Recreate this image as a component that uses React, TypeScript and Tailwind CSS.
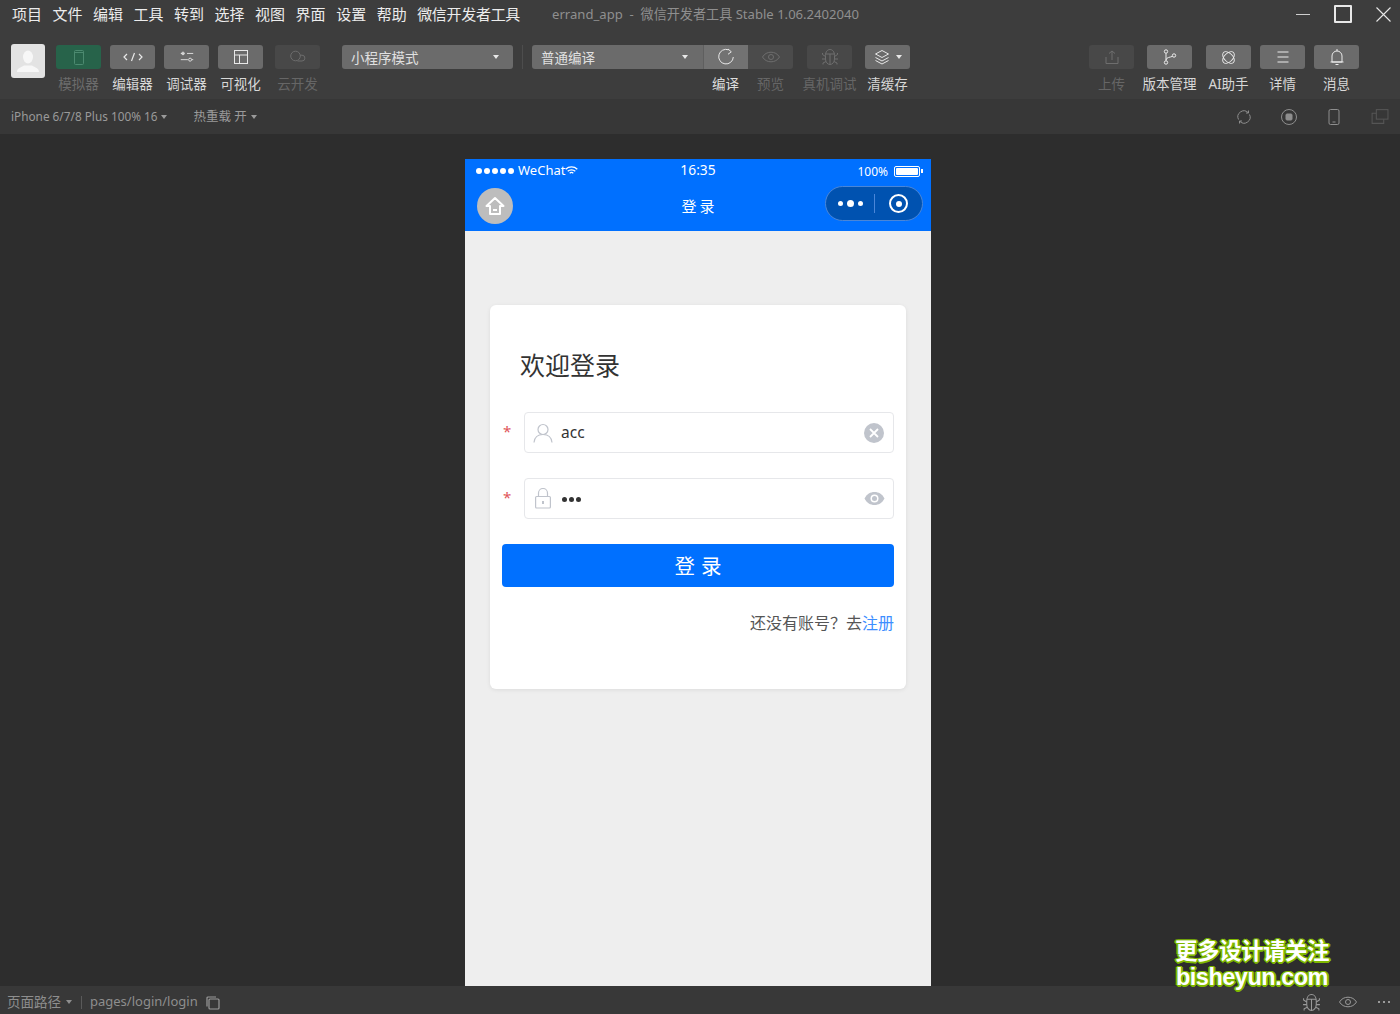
const font = "font-['Noto_Sans','Noto_Sans_CJK_SC',sans-serif]";
const menus = ["项目", "文件", "编辑", "工具", "转到", "选择", "视图", "界面", "设置", "帮助"];

function Caret({ className = "" }: { className?: string }) {
  return <span className={"inline-block w-0 h-0 border-x-[3px] border-x-transparent border-t-[4px] " + className} />;
}

function Tool({
  label,
  bg = "bg-[#6b6b6b]",
  text = "text-[#d8d8d8]",
  children,
}: {
  label?: string;
  bg?: string;
  text?: string;
  children?: React.ReactNode;
}) {
  return (
    <div className="flex flex-col items-center w-[45px]">
      <div className={"w-full h-6 rounded-[3px] flex items-center justify-center " + bg}>{children}</div>
      <div className={"h-[20px] mt-[5px] text-[13.5px] leading-[20px] whitespace-nowrap " + text}>{label}</div>
    </div>
  );
}

const Ico = ({ c, children, w = 18 }: { c: string; children: React.ReactNode; w?: number }) => (
  <svg width={w} height={w} viewBox="0 0 18 18" fill="none" stroke={c} strokeWidth="1">
    {children}
  </svg>
);

function Bug({ c, size = 18 }: { c: string; size?: number }) {
  return (
    <Ico c={c} w={size}>
      <path d="M4.500 7.500C4.500 3.800 6.500 1.500 9 1.500s4.500 2.300 4.500 6v3.500c0 3-2 5.500-4.500 5.500s-4.500-2.500-4.500-5.500z" />
      <path d="M4.500 6h9M9 6v10.500M4.500 8.500L1.500 6.500V5M13.500 8.500l3-2V5M4.500 11H1M13.500 11H17M5 13.500l-3 1.500v1.500M13 13.500l3 1.500v1.500" />
    </Ico>
  );
}

function Eye({ c }: { c: string }) {
  return (
    <Ico c={c}>
      <path d="M.500 9c2-3.200 4.900-4.800 8.500-4.800s6.500 1.600 8.500 4.800c-2 3.200-4.900 4.800-8.500 4.800S2.500 12.200.500 9z" />
      <circle cx="9" cy="9" r="2.500" />
    </Ico>
  );
}

function Field({ icon, right, children }: { icon: React.ReactNode; right: React.ReactNode; children: React.ReactNode }) {
  return (
    <div className="flex items-center">
      <div className="w-[22px] pl-px text-[#e0555a] text-[15px] leading-none pb-[3px]">*</div>
      <div className="flex-1 h-[41px] rounded-[4px] border border-[#e6e7ea] flex items-center pl-[8px] pr-[8px] text-[#333]">
        <div className="w-[20px] flex justify-center">{icon}</div>
        <div className="flex-1 ml-[8px] pt-px text-[15.500px]">{children}</div>
        {right}
      </div>
    </div>
  );
}

export default function App() {
  return (
    <div className={"relative w-[1400px] h-[1014px] overflow-hidden flex flex-col bg-[#2d2d2d] " + font}>
      {/* titlebar + toolbar */}
      <div className="h-[99px] bg-[#3d3d3d] shrink-0">
        <div className="h-[28px] flex items-center pl-3 text-[15px] text-[#ececec]">
          <div className="flex gap-[10.500px]">
            {menus.map((m) => (
              <span key={m}>{m}</span>
            ))}
            <span className="tracking-[-0.3px]">微信开发者工具</span>
          </div>
          <span className="ml-[32px] pt-px text-[13.100px] text-[#8f8f8f]">errand_app&nbsp; -&nbsp; 微信开发者工具 Stable 1.06.2402040</span>
          <div className="ml-auto flex items-center">
            <div className="w-[14px] h-px bg-[#cfcfcf] mr-[24px]" />
            <div className="w-[18px] h-[18px] border-2 border-[#e8e8e8] rounded-[1px] mr-[24px]" />
            <svg className="mr-[9px]" width="15" height="15" viewBox="0 0 15 15" fill="none" stroke="#e8e8e8" strokeWidth="1.100">
              <path d="M.500.500l14 14M14.500.500l-14 14" />
            </svg>
          </div>
        </div>
        <div className="mt-[17px] flex pl-[11px]">
          <div className="w-[34px] h-[34px] -mt-[1px] rounded-[3px] bg-[#e3e3e3] flex items-center justify-center mr-[11px]">
            <svg width="26" height="26" viewBox="0 0 26 26" fill="#f7f7f7">
              <ellipse cx="13" cy="9" rx="5" ry="6.500" />
              <path d="M2 24c0-4 4-4.500 7-6.500h8c3 2 7 2.500 7 6.500z" />
            </svg>
          </div>
          <div className="flex gap-[9px]">
            <Tool label="模拟器" bg="bg-[#27634a]" text="text-[#6c6c6c]">
              <svg width="10" height="15" viewBox="0 0 10 15" fill="none" stroke="#4c8a70"><rect x="0.500" y="0.500" width="9" height="14" rx="1" /><path d="M.500 2.500h9" /></svg>
            </Tool>
            <Tool label="编辑器">
              <svg width="20" height="10" viewBox="0 0 20 10" fill="none" stroke="#e8e8e8" strokeWidth="1.200">
                <path d="M4 2L1 5l3 3M16 2l3 3-3 3M11.500 1L8.500 9" />
              </svg>
            </Tool>
            <Tool label="调试器">
              <Ico c="#e4e4e4" w={16}>
                <path d="M2 5h4M9 5h7M2 12h8M14.500 12H16" />
                <circle cx="7.500" cy="5" r="1.500" transform="translate(-3 0)" />
                <circle cx="12.500" cy="12" r="1.700" />
              </Ico>
            </Tool>
            <Tool label="可视化">
              <Ico c="#e8e8e8">
                <rect x="2.500" y="2.500" width="13" height="13" />
                <path d="M2.500 7h13M7.500 7v8.500" />
              </Ico>
            </Tool>
          </div>
          <div className="ml-3">
            <Tool label="云开发" bg="bg-[#484848]" text="text-[#666]">
              <Ico c="#6c6c6c">
                <circle cx="6.500" cy="8" r="4.800" />
                <path d="M8.500 13h4.500a2.900 2.900 0 0 0 0-5.800h-2" />
              </Ico>
            </Tool>
          </div>
          <div className="ml-[22px] w-[171px] h-6 rounded-[3px] bg-[#6b6b6b] flex items-center pl-[9px] pr-[14px] text-[13.500px] text-[#e0e0e0]">
            <span className="pt-[2px]">小程序模式</span>
            <Caret className="ml-auto border-t-[#e8e8e8]" />
          </div>
          <div className="ml-[9px] w-px h-6 bg-[#4d4d4d]" />
          <div className="ml-[9px] flex">
            <div className="w-[171px] h-6 rounded-l-[3px] bg-[#6b6b6b] flex items-center pl-[9px] pr-[15px] text-[13.500px] text-[#e0e0e0]">
              <span className="pt-[2px]">普通编译</span>
              <Caret className="ml-auto border-t-[#e8e8e8]" />
            </div>
            <Tool label="编译" text="text-[#dcdcdc]" bg="bg-[#727272] border-l border-[#5f5f5f] rounded-none">
              <Ico c="#e8e8e8">
                <path d="M11.500 1.800A7.300 7.300 0 1 0 16.300 9" />
                <path d="M11 1l3.300 2.800L11 6.300" />
              </Ico>
            </Tool>
            <Tool label="预览" bg="bg-[#4b4b4b] rounded-l-none" text="text-[#666]">
              <Eye c="#6e6e6e" />
            </Tool>
          </div>
          <div className="ml-[14px]">
            <Tool label="真机调试" bg="bg-[#484848]" text="text-[#666]">
              <Bug c="#6e6e6e" />
            </Tool>
          </div>
          <div className="ml-[13px]">
            <Tool label="清缓存">
              <Ico c="#e8e8e8">
                <path d="M9 2.500L2.500 6 9 9.500 15.500 6zM2.500 9.500L9 13l6.500-3.500M2.500 12.500L9 16l6.500-3.500" />
              </Ico>
              <Caret className="ml-[5px] border-t-[#e8e8e8]" />
            </Tool>
          </div>
          <div className="ml-auto mr-[41px] flex">
            <div className="mr-[13px]">
              <Tool label="上传" bg="bg-[#484848]" text="text-[#666]">
                <Ico c="#6e6e6e">
                  <path d="M9 12V3M6 5.500L9 3l3 2.500M3 9v6.500h12V9" />
                </Ico>
              </Tool>
            </div>
            <div className="mr-[14px]">
              <Tool label="版本管理">
                <Ico c="#ececec">
                  <circle cx="5" cy="3.500" r="1.700" />
                  <circle cx="5" cy="14.500" r="1.700" />
                  <circle cx="13" cy="7.500" r="1.700" />
                  <path d="M5 5.200v7.600M11.500 8.300C9 9.500 5.500 9 5 12" />
                </Ico>
              </Tool>
            </div>
            <div className="flex gap-[9px]">
              <Tool label="AI助手">
                <Ico c="#ececec" w={17}>
                  <ellipse cx="9" cy="9" rx="7.500" ry="4.500" transform="rotate(45 9 9)" />
                  <ellipse cx="9" cy="9" rx="7.500" ry="4.500" transform="rotate(-45 9 9)" />
                </Ico>
              </Tool>
              <Tool label="详情">
                <Ico c="#ececec">
                  <path d="M3.500 4h11M3.500 9h11M3.500 14h11" />
                </Ico>
              </Tool>
              <Tool label="消息">
                <Ico c="#ececec">
                  <path d="M4 14V8a5 5 0 0 1 10 0v6zM2.500 14h13M9 1v2M7.500 16.500h3" />
                </Ico>
              </Tool>
            </div>
          </div>
        </div>
      </div>

      {/* device bar */}
      <div className="h-[35px] bg-[#373737] shrink-0 flex items-center pl-[11px] pr-[11px] text-[11.800px] text-[#9a9a9a]">
        <span className="pt-px">iPhone 6/7/8 Plus 100% 16</span>
        <Caret className="ml-[3px] border-t-[#9a9a9a]" />
        <span className="ml-[27px] pt-px text-[12.500px]">热重载 开</span>
        <Caret className="ml-[4px] border-t-[#9a9a9a]" />
        <div className="ml-auto flex items-center gap-[27px]">
          <Ico c="#8e8e8e">
            <path d="M3.500 11.500A6 6 0 0 1 13 4.500M14.500 6.500A6 6 0 0 1 5 13.500" />
            <path d="M13.500 2.500v2.500H11M4.500 15.500V13H7" />
          </Ico>
          <svg width="18" height="18" viewBox="0 0 18 18" fill="none" stroke="#8e8e8e">
            <circle cx="9" cy="9" r="7.500" />
            <rect x="6" y="6" width="6" height="6" rx="1" fill="#8e8e8e" />
          </svg>
          <Ico c="#8e8e8e">
            <rect x="4" y="1.500" width="10" height="15" rx="1.500" />
            <path d="M7.500 14h3" />
          </Ico>
          <Ico c="#555" w={19}>
            <rect x="6" y="2.500" width="11" height="9" />
            <path d="M6 6H2v9.500h11v-4" />
          </Ico>
        </div>
      </div>

      {/* simulator */}
      <div className="flex-1 min-h-0 flex justify-center pt-[25px] pr-[4px]">
        <div className="w-[466px] bg-[#eeeeee] flex flex-col">
          <div className="h-[72px] bg-[#0070ff] shrink-0 text-white flex flex-col">
            <div className="h-[24px] flex items-center pl-[11px] pr-[8px] relative">
              <div className="flex gap-[2px]">
                {[0, 1, 2, 3, 4].map((i) => (
                  <span key={i} className="w-[6px] h-[6px] rounded-full bg-white" />
                ))}
              </div>
              <span className="ml-[4px] text-[13px]">WeChat</span>
              <svg width="13" height="10" viewBox="0 0 13 10" fill="none" stroke="white" strokeWidth="1.300">
                <path d="M.700 3.200a8.500 8.500 0 0 1 11.600 0M2.700 5.300a5.500 5.500 0 0 1 7.600 0M4.700 7.300a2.600 2.600 0 0 1 3.600 0" />
              </svg>
              <span className="absolute left-0 right-0 text-center text-[13.800px] -mt-[1px]">16:35</span>
              <span className="ml-auto pt-px text-[12px]">100%</span>
              <div className="ml-[6px] w-[26px] h-[11px] border border-white rounded-[2px] p-px">
                <div className="w-full h-full bg-white rounded-[1px]" />
              </div>
              <div className="w-[2px] h-[4px] bg-white ml-px" />
            </div>
            <div className="flex-1 relative flex items-center justify-center pb-[1px]">
              <span className="text-[15px] tracking-[3px] pl-[3px]">登录</span>
              <div className="absolute left-[12px] top-[5px] w-9 h-9 rounded-full bg-[#bdbdbd] flex items-center justify-center">
                <svg width="22" height="22" viewBox="0 0 22 22" fill="none" stroke="white" strokeWidth="2" strokeLinejoin="round">
                  <path d="M11 3L2.500 11H6v8h10v-8h3.500z" />
                  <path d="M9 15h4" />
                </svg>
              </div>
              <div className="absolute right-[8px] top-[3px] w-[98px] h-[35px] rounded-full bg-[#0052b0] border border-[#4a86d8] flex items-center">
                <div className="w-[48px] flex items-center justify-center gap-[4px]">
                  <span className="w-[5px] h-[5px] rounded-full bg-white" />
                  <span className="w-[7px] h-[7px] rounded-full bg-white" />
                  <span className="w-[5px] h-[5px] rounded-full bg-white" />
                </div>
                <div className="w-px h-[19px] bg-[#4a86d8]" />
                <div className="flex-1 flex justify-center">
                  <div className="w-[19px] h-[19px] rounded-full border-[2.500px] border-white flex items-center justify-center">
                    <div className="w-[6px] h-[6px] rounded-full bg-white" />
                  </div>
                </div>
              </div>
            </div>
          </div>

          <div className="px-[25px] pt-[74px]">
            <div className="h-[384px] bg-white rounded-[6px] shadow-[0_1px_4px_rgba(0,0,0,0.08)] px-[12px] pt-[43px]">
              <div className="pl-[18px] text-[25px] leading-[34px] text-[#333]">欢迎登录</div>
              <div className="mt-[30px] flex flex-col gap-[25px]">
                <Field
                  icon={
                    <svg width="20" height="20" viewBox="0 0 20 20" fill="none" stroke="#c0c4cc" strokeWidth="1.200">
                      <circle cx="10" cy="6.500" r="5" />
                      <path d="M1 19.500c.5-5 4-8 9-8s8.500 3 9 8" />
                    </svg>
                  }
                  right={
                    <div className="w-5 h-5 mr-px rounded-full bg-[#c0c4cc] flex items-center justify-center">
                      <svg width="10" height="10" viewBox="0 0 10 10" stroke="white" strokeWidth="1.800">
                        <path d="M1 1l8 8M9 1L1 9" />
                      </svg>
                    </div>
                  }
                >
                  acc
                </Field>
                <Field
                  icon={
                    <svg width="16" height="21" viewBox="0 0 16 21" fill="none" stroke="#c0c4cc" strokeWidth="1.200">
                      <rect x="0.600" y="8.500" width="14.800" height="11.500" rx="1" />
                      <path d="M3.500 8.500V5a4.500 4.500 0 0 1 9 0v3.500" />
                      <path d="M8 13v3" strokeWidth="2" />
                    </svg>
                  }
                  right={
                    <svg width="21" height="15" viewBox="0 0 21 15">
                      <path fill="#c0c4cc" d="M.500 7.500C2.800 3 6.300 1 10.500 1s7.700 2 10 6.500c-2.300 4.500-5.800 6.500-10 6.500S2.800 12 .500 7.500z" />
                      <circle cx="10.500" cy="7.500" r="4" fill="#fff" />
                      <circle cx="10.500" cy="7.500" r="2.500" fill="#c0c4cc" />
                    </svg>
                  }
                >
                  <span className="flex gap-[2px] ml-[1px]">
                    <span className="w-[5px] h-[5px] rounded-full bg-[#333]" />
                    <span className="w-[5px] h-[5px] rounded-full bg-[#333]" />
                    <span className="w-[5px] h-[5px] rounded-full bg-[#333]" />
                  </span>
                </Field>
              </div>
              <div className="mt-[25px] h-[43px] rounded-[4px] bg-[#0070ff] text-white text-[20.500px] tracking-[6px] flex items-center justify-center pl-[6px] pt-px">
                登录
              </div>
              <div className="mt-[25px] text-right text-[16px] leading-[22px] text-[#555]">
                还没有账号？去<span className="text-[#3d8eff]">注册</span>
              </div>
            </div>
          </div>
        </div>
      </div>

      {/* bottom bar */}
      <div className="h-[28px] bg-[#383838] shrink-0 flex items-center pl-[7px] pr-[9px] pt-[4px] text-[13.500px] text-[#8e8e8e]">
        <span>页面路径</span>
        <Caret className="ml-[5px] border-x-[3.500px] border-t-[#8e8e8e]" />
        <div className="ml-[9px] w-px h-[13px] bg-[#5a5a5a]" />
        <span className="ml-[8px] text-[13px]">pages/login/login</span>
        <svg className="ml-[8px] mt-[2px]" width="14" height="14" viewBox="0 0 14 14" fill="none" stroke="#9a9a9a" strokeWidth="1.200">
          <rect x="3" y="3" width="10" height="10" rx="1" />
          <path d="M1 10.500V2a1 1 0 0 1 1-1h8" />
        </svg>
        <div className="ml-auto flex items-center gap-[18px]">
          <Bug c="#9a9a9a" size={19} />
          <Eye c="#9a9a9a" />
          <div className="flex gap-[3px] ml-[3px] mr-[1px]">
            <span className="w-[2px] h-[2px] bg-[#9a9a9a]" />
            <span className="w-[2px] h-[2px] bg-[#9a9a9a]" />
            <span className="w-[2px] h-[2px] bg-[#9a9a9a]" />
          </div>
        </div>
      </div>

      {/* watermark */}
      <div className="absolute left-[1172px] top-[937px] w-[160px] text-center font-bold text-white leading-[27px] text-[23.500px] tracking-[-0.5px] [text-shadow:-1px_-1px_0_#7fb800,1px_-1px_0_#7fb800,-1px_1px_0_#7fb800,1px_1px_0_#7fb800,0_2px_0_#7fb800,2px_0_0_#7fb800,-2px_0_0_#7fb800]">
        <div className="text-[22.500px]">更多设计请关注</div>
        <div className="font-['Liberation_Sans',sans-serif]">bisheyun.com</div>
      </div>
    </div>
  );
}
